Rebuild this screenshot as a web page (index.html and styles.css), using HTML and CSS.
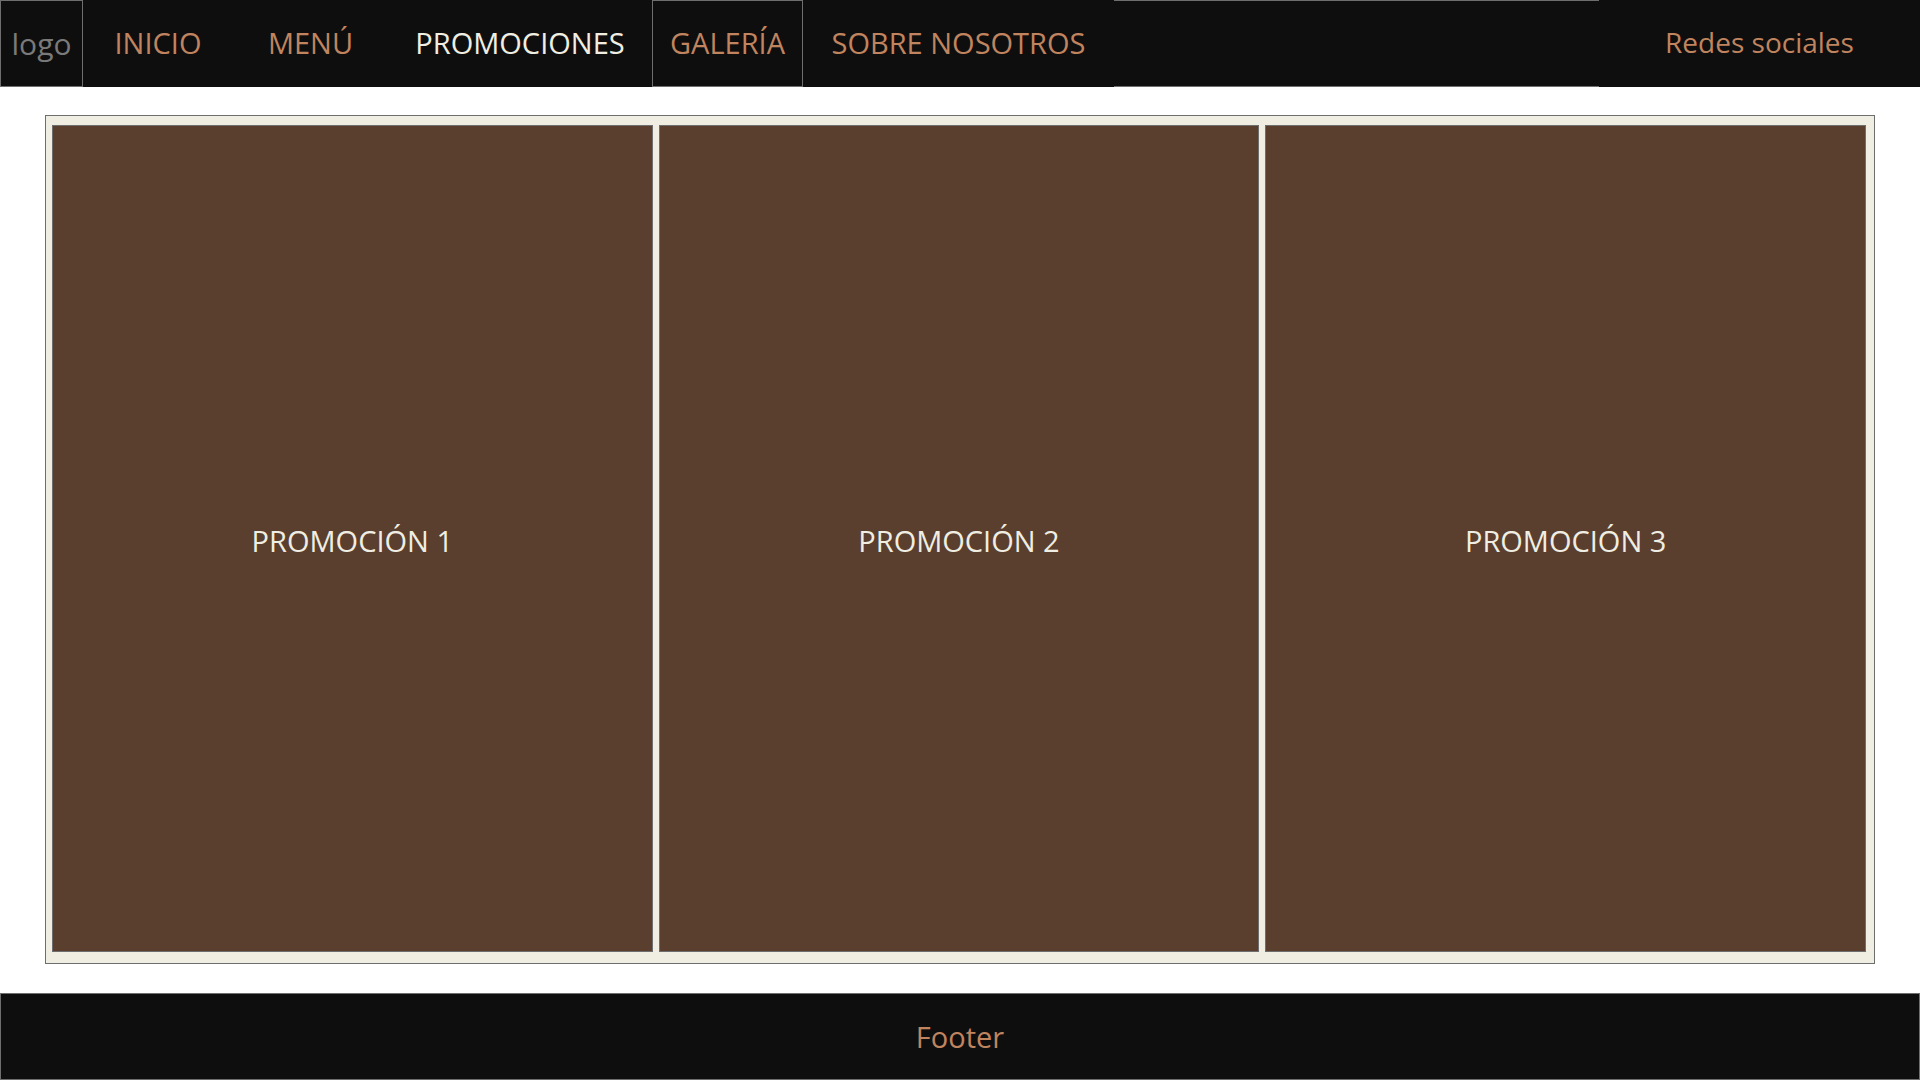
FILE: index.html
```html
<!DOCTYPE html>
<html lang="es">
<head>
  <meta charset="UTF-8" />
  <meta name="viewport" content="width=device-width, initial-scale=1.0"/>
  <title>Promociones</title>
  <link rel="stylesheet" href="styles.css">
</head>
<body>
<header class="top">
  <div class="logo">logo</div>
  <nav class="menu">
    <a href="#">INICIO</a>
    <a href="#">MENÚ</a>
    <a href="#" class="current">PROMOCIONES</a>
    <a href="#" class="boxed">GALERÍA</a>
    <a href="#">SOBRE NOSOTROS</a>
  </nav>
  <div class="spacer"></div>
  <div class="social">Redes sociales</div>
</header>

<main class="promos">
  <div class="promo">PROMOCIÓN 1</div>
  <div class="promo">PROMOCIÓN 2</div>
  <div class="promo">PROMOCIÓN 3</div>
</main>

<footer class="bottom">Footer</footer>
</body>
</html>
```

FILE: styles.css
```css
html, body {
  height: 100%;
  margin: 0;
}

body {
  display: flex;
  flex-direction: column;
  background-color: #ffffff;
  font-family: "Open Sans", "Noto Sans", sans-serif;
  font-size: 29px;
}

.top {
  display: flex;
  height: 87px;
  background-color: #0e0e0e;
  color: #c0845f;
}

.logo {
  width: 83px;
  box-sizing: border-box;
  border: 1px solid #6e6e6e;
  display: flex;
  justify-content: center;
  align-items: center;
  color: #7a7a7a;
  font-size: 30px;
}

.menu {
  display: grid;
  grid-template-columns: 150px 155px 264px 151px 311px;
}

.menu a {
  display: flex;
  justify-content: center;
  align-items: center;
  padding-bottom: 3px;
  color: #c0845f;
  text-decoration: none;
  box-sizing: border-box;
}

.menu a.current {
  color: #f0eee2;
}

.menu a.boxed {
  border: 1px solid #6e6e6e;
}

.spacer {
  flex: 1;
  border-top: 1px solid #6e6e6e;
  border-bottom: 1px solid #6e6e6e;
}

.social {
  width: 321px;
  display: flex;
  justify-content: center;
  align-items: center;
  padding-bottom: 3px;
  box-sizing: border-box;
  font-size: 28px;
}

.promos {
  flex: 1;
  margin: 28px 45px 29px;
  padding: 9px 8px 11px 6px;
  border: 1px solid #6e6e6e;
  background-color: #f0eee2;
  display: grid;
  grid-template-columns: 1fr 1fr 1fr;
  gap: 6px;
}

.promo {
  background-color: #5a3e2e;
  border: 1px solid #6e6e6e;
  display: flex;
  justify-content: center;
  align-items: center;
  padding-top: 4px;
  color: #f0eee2;
}

.bottom {
  height: 87px;
  box-sizing: border-box;
  border: 1px solid #6e6e6e;
  background-color: #0e0e0e;
  color: #c0845f;
  display: flex;
  justify-content: center;
  align-items: center;
}
```
